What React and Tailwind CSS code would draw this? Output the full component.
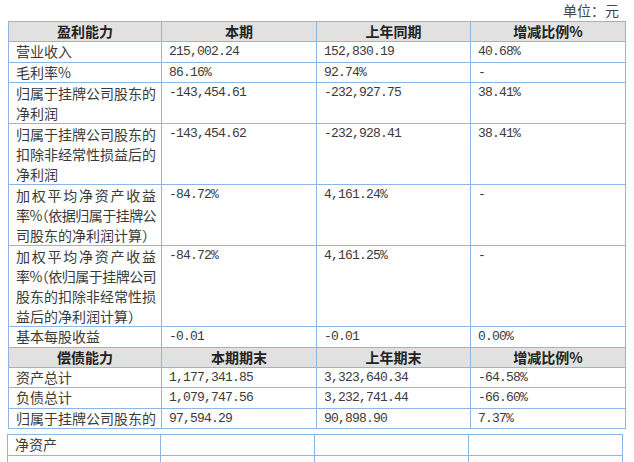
import React from 'react';

const cjk = '"Noto Sans CJK SC", sans-serif';
const num = '"Liberation Mono", "Noto Sans CJK SC", monospace';

const profit = [
    { label: ['营业收入'], cur: '215,002.24', prev: '152,830.19', chg: '40.68%' },
    { label: ['毛利率%'], cur: '86.16%', prev: '92.74%', chg: '-' },
    { label: ['归属于挂牌公司股东的', '净利润'], cur: '-143,454.61', prev: '-232,927.75', chg: '38.41%' },
    { label: ['归属于挂牌公司股东的', '扣除非经常性损益后的', '净利润'], cur: '-143,454.62', prev: '-232,928.41', chg: '38.41%' },
    { label: ['加权平均净资产收益', '率%（依据归属于挂牌公', '司股东的净利润计算）'], cur: '-84.72%', prev: '4,161.24%', chg: '-' },
    { label: ['加权平均净资产收益', '率%（依归属于挂牌公司', '股东的扣除非经常性损', '益后的净利润计算）'], cur: '-84.72%', prev: '4,161.25%', chg: '-' },
    { label: ['基本每股收益'], cur: '-0.01', prev: '-0.01', chg: '0.00%' },
];

const debt = [
    { label: ['资产总计'], cur: '1,177,341.85', prev: '3,323,640.34', chg: '-64.58%' },
    { label: ['负债总计'], cur: '1,079,747.56', prev: '3,232,741.44', chg: '-66.60%' },
    { label: ['归属于挂牌公司股东的'], cur: '97,594.29', prev: '90,898.90', chg: '7.37%' },
];

const td = 'border border-[#8db6e3] pl-[7px] pr-[4px] py-0 align-top whitespace-nowrap overflow-hidden';
const th = 'border border-[#8db6e3] bg-[#e1e1e1] text-center font-bold leading-[19px] text-[14px] text-[#222] p-0';

// lines that fill the cell are spread edge to edge, as in the source document
const Label = ({ lines }) => (
    <div className="w-[140px]">
        {lines.map((l, i) => {
            const full = i < lines.length - 1 || l.length >= 10;
            const tight = l.includes('（');
            return (
                <div
                    key={i}
                    className={(full ? '[text-align-last:justify] text-justify ' : '') + (tight ? 'tracking-[-0.6px] [font-feature-settings:"halt"]' : '')}
                >
                    {l}
                </div>
            );
        })}
    </div>
);

const Header = ({ cols }) => (
    <tr>
        {cols.map((c) => (
            <th key={c} className={th} style={{ fontFamily: cjk }}>{c}</th>
        ))}
    </tr>
);

const Row = ({ r }) => {
    const lh = r.label.length === 1 ? 'leading-[19.5px]' : 'leading-[20px]';
    return (
        <tr>
            <td className={`${td} ${lh} text-[14px]`} style={{ fontFamily: cjk }}><Label lines={r.label} /></td>
            <td className={`${td} ${lh} text-[13px] tracking-[-0.8px]`} style={{ fontFamily: num }}>{r.cur}</td>
            <td className={`${td} ${lh} text-[13px] tracking-[-0.8px]`} style={{ fontFamily: num }}>{r.prev}</td>
            <td className={`${td} ${lh} text-[13px] tracking-[-0.8px]`} style={{ fontFamily: num }}>{r.chg}</td>
        </tr>
    );
};

export default function App() {
    return (
        <div className="w-[634px] h-[462px] overflow-hidden bg-white text-[14px] text-[#3a3a3a]" style={{ fontFamily: cjk }}>
            <div className="h-[21px] flex items-center justify-end pr-[15px] text-[14px] text-[#444]">单位：元</div>
            <table className="ml-[8px] w-[617px] border-collapse table-fixed">
                <colgroup>
                    <col className="w-[153px]" />
                    <col className="w-[155px]" />
                    <col className="w-[154px]" />
                    <col className="w-[155px]" />
                </colgroup>
                <tbody>
                    <Header cols={['盈利能力', '本期', '上年同期', '增减比例%']} />
                    {profit.map((r, i) => <Row key={i} r={r} />)}
                    <Header cols={['偿债能力', '本期期末', '上年期末', '增减比例%']} />
                    {debt.map((r, i) => <Row key={i} r={r} />)}
                </tbody>
            </table>
            <table className="ml-[7px] mt-[5px] w-[615px] border-collapse table-fixed">
                <colgroup>
                    <col className="w-[153px]" />
                    <col className="w-[154px]" />
                    <col className="w-[154px]" />
                    <col className="w-[154px]" />
                </colgroup>
                <tbody>
                    <tr>
                        <td className={`${td} leading-[19.5px] text-[14px]`}>净资产</td>
                        <td className={td}></td>
                        <td className={td}></td>
                        <td className={td}></td>
                    </tr>
                    <tr>
                        <td className={`${td} leading-[19.5px] text-[14px]`}>&nbsp;</td>
                        <td className={td}></td>
                        <td className={td}></td>
                        <td className={td}></td>
                    </tr>
                </tbody>
            </table>
        </div>
    );
}
